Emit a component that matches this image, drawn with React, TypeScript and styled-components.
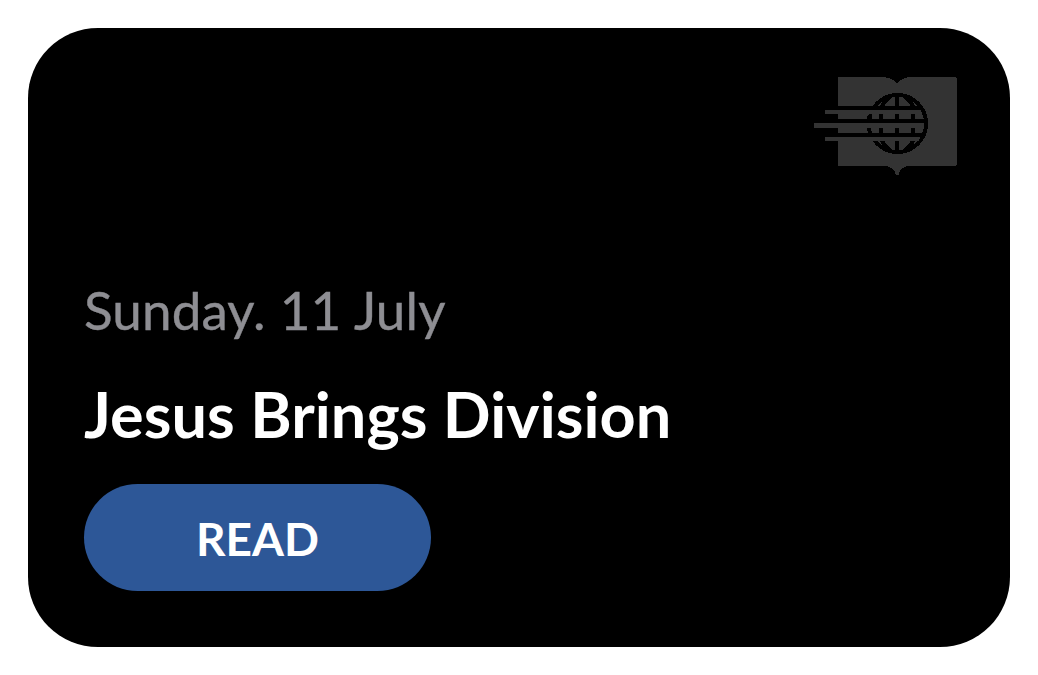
import React from "react";
import styled, { createGlobalStyle } from "styled-components";

const GlobalStyle = createGlobalStyle`
  body { margin: 0; background: #fff; font-family: Lato, sans-serif; }
`;

const Page = styled.main`
  box-sizing: border-box;
  height: 675px;
  padding: 28px;
`;

const Card = styled.article`
  box-sizing: border-box;
  display: flex;
  flex-direction: column;
  align-items: flex-start;
  height: 619px;
  padding: 48px 53px 56px 56px;
  border-radius: 70px;
  background: #000;
`;

const Logo = styled.svg`
  display: block;
  align-self: flex-end;
  margin-bottom: auto;
`;

const DateLine = styled.p`
  margin: 0 0 34px;
  font-size: 53px;
  line-height: 64px;
  letter-spacing: 0.12px;
  word-spacing: 0.5px;
  -webkit-text-stroke: 0.4px #8e8e93;
  color: #8e8e93;
`;

const Title = styled.h1`
  margin: 0 0 32px;
  font-size: 63px;
  font-weight: 700;
  line-height: 76px;
  letter-spacing: 0.06px;
  color: #fff;
  white-space: nowrap;
`;

const ReadButton = styled.button`
  width: 347px;
  height: 107px;
  padding: 2px 0 0;
  border: 0;
  border-radius: 54px;
  background: #2d5797;
  color: #fff;
  font: 700 46px/56px Lato, sans-serif;
`;

export default function App() {
  return (
    <>
      <GlobalStyle />
      <Page>
        <Card>
          <Logo width="143" height="100" viewBox="814 76 143 100" fill="#333" shapeRendering="crispEdges">
            <path d="M838 77H880Q893 77 897 84Q901 77 912 77H955L957 79V164L955 166H910Q900 166 898.5 175H896Q894 166 884 166H838Z" />
            <circle cx="897.5" cy="123.5" r="28.5" fill="none" stroke="#000" strokeWidth="4" />
            <g fill="none" stroke="#000" strokeWidth="4">
              <path d="M897 95V106M892 95Q886 99 881.5 107M903 95Q909 99 913.5 107" />
              <path d="M897 141V152M881.5 140Q886 148 892 152M913.5 140Q909 148 903 152" />
            </g>
            <path d="M838 110H921L923 119L924 123V128L922 133H838ZM838 137H920L919 141H838Z" />
            <path fill="#000" d="M838 106H922V110H838ZM838 119H925V123H838ZM838 133H924V137H838Z" />
            <path fill="#000" d="M867 119V116L869 114H872V119ZM879 114H883V119H879ZM895 114H899V119H895ZM911 114H915V119H911ZM867 128H871L872 133H868ZM879 128H883V133H879ZM895 128H899V133H895ZM911 128H915V133H911Z" />
            <path d="M825 110H838V114H825ZM814 123H838V128H814ZM825 137H838V141H825Z" />
          </Logo>
          <DateLine>Sunday. 11 July</DateLine>
          <Title>Jesus Brings Division</Title>
          <ReadButton>READ</ReadButton>
        </Card>
      </Page>
    </>
  );
}
